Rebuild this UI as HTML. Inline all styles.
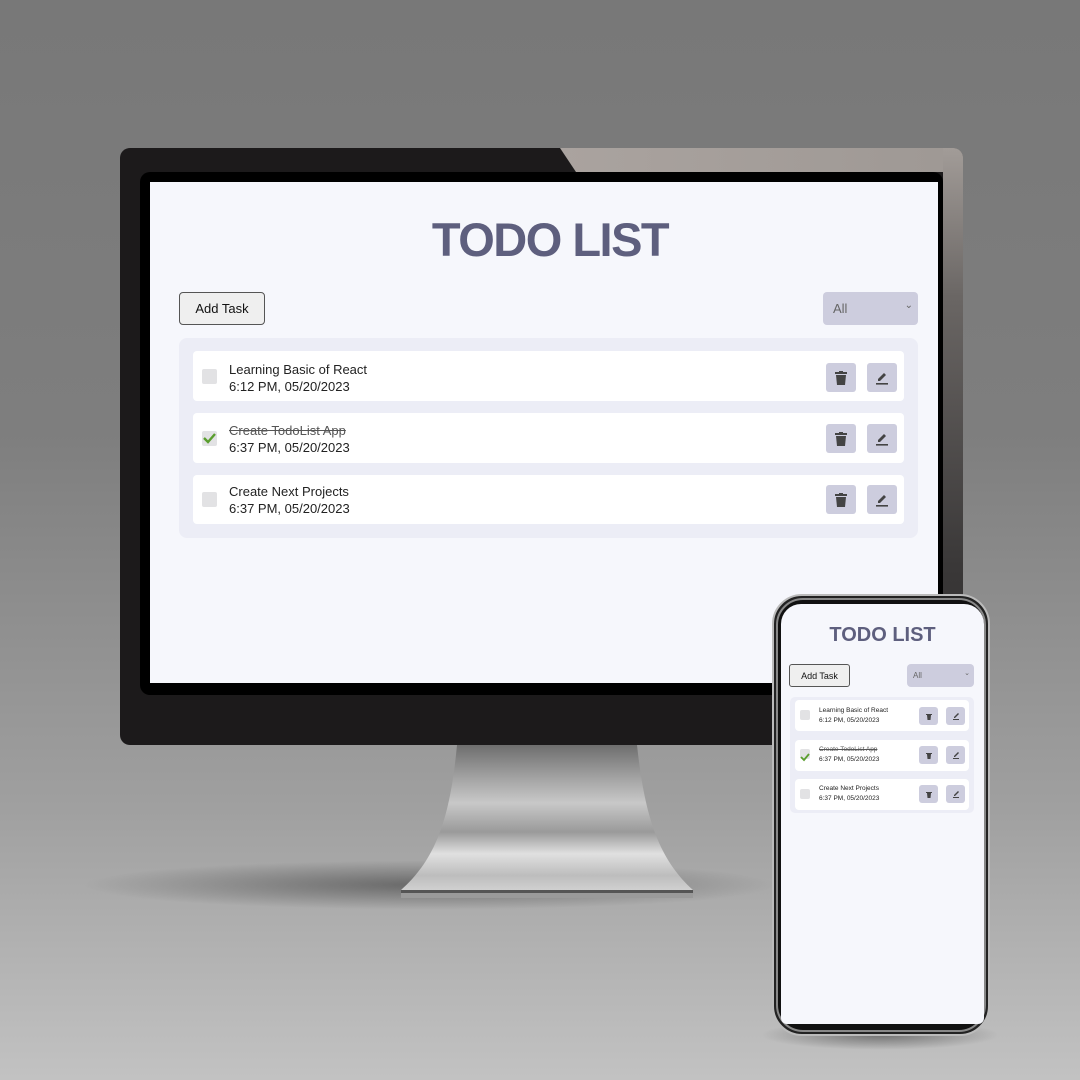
<!DOCTYPE html>
<html><head><meta charset="utf-8"><style>
*{margin:0;padding:0;box-sizing:border-box}
body{width:1080px;height:1080px;position:relative;overflow:hidden;font-family:"Liberation Sans",sans-serif;
background:linear-gradient(#787878 0%,#7e7e7e 40%,#a0a0a0 75%,#c2c2c2 100%)}
.a{position:absolute}
.t{color:#5e5f7e;font-weight:bold;text-align:center;letter-spacing:-1px}
.btn{background:#efefef;border:1px solid #555;border-radius:4px;font-size:13px;display:flex;align-items:center;justify-content:center;color:#111}
.sel{background:#cdcdde;border-radius:4px;color:#666;font-size:13px}
.list{background:#ecedf6;border-radius:8px}
.it{background:#fff;border-radius:4px}
.cb{background:#e2e2e4;border-radius:2px}
.ib{background:#cdcdde;border-radius:3px;display:flex;align-items:center;justify-content:center}
</style></head><body>
<div class="a" style="left:80px;top:860px;width:700px;height:50px;border-radius:50%;background:radial-gradient(ellipse,rgba(60,60,60,.6),rgba(0,0,0,0) 70%)"></div>
<svg class="a" style="left:395px;top:740px" width="305" height="165">
<defs><linearGradient id="sg" x1="0" y1="0" x2="0" y2="1">
<stop offset="0" stop-color="#6e6e6e"/><stop offset=".25" stop-color="#a8a8a8"/><stop offset=".4" stop-color="#c8c8c8"/><stop offset=".6" stop-color="#9a9a9a"/><stop offset=".75" stop-color="#e0e0e0"/><stop offset=".9" stop-color="#bdbdbd"/><stop offset="1" stop-color="#d0d0d0"/></linearGradient></defs>
<path d="M62 5 L242 5 C250 80 265 120 298 150 L6 150 C40 120 55 80 62 5 Z" fill="url(#sg)"/>
<rect x="6" y="150" width="292" height="3" fill="#555"/>
<rect x="6" y="153" width="292" height="5" fill="#9a9a9a"/>
</svg>
<div class="a" style="left:120px;top:148px;width:843px;height:597px;background:#1c1a1b;border-radius:10px;overflow:hidden">
<div class="a" style="left:440px;top:0;width:410px;height:24px;background:linear-gradient(90deg,#aaa39f,#9e9894);clip-path:polygon(0 0,100% 0,100% 100%,16px 100%)"></div>
<div class="a" style="right:0;top:0;width:20px;height:597px;background:linear-gradient(#a29c98,#6a6664 25%,#3a3838 70%,#2a2828)"></div>
</div>
<div class="a" style="left:140px;top:172px;width:803px;height:523px;background:#000;border-radius:10px"></div>
<div class="a" style="left:150px;top:182px;width:788px;height:501px;background:#f6f7fc"></div>
<div class="a t" style="left:150px;top:212px;width:800px;font-size:47px;letter-spacing:-1.5px">TODO LIST</div>
<div class="a btn" style="left:179px;top:292px;width:86px;height:33px">Add Task</div>
<div class="a sel" style="left:823px;top:292px;width:95px;height:33px"><span class="a" style="left:10px;top:9px">All</span><span class="a" style="right:5px;top:8px;font-size:10px">⌄</span></div>
<div class="a list" style="left:179px;top:338px;width:739px;height:200px"></div>

<div class="a it" style="left:193px;top:351px;width:711px;height:50px"></div>
<div class="a it" style="left:193px;top:413px;width:711px;height:50px"></div>
<div class="a it" style="left:193px;top:475px;width:711px;height:49px"></div>

<div class="a cb" style="left:202px;top:369px;width:15px;height:15px"></div>
<div class="a cb" style="left:202px;top:431px;width:15px;height:15px"><svg width="15" height="15"><path d="M2 7 L6 11 L13 3" stroke="#5a9e2e" stroke-width="2.4" fill="none"/></svg></div>
<div class="a cb" style="left:202px;top:492px;width:15px;height:15px"></div>

<div class="a" style="left:229px;top:361px;font-size:13px;line-height:17px;color:#222">Learning Basic of React<br>6:12 PM, 05/20/2023</div>
<div class="a" style="left:229px;top:422px;font-size:13px;line-height:17px;color:#222"><s style="color:#555">Create TodoList App</s><br>6:37 PM, 05/20/2023</div>
<div class="a" style="left:229px;top:483px;font-size:13px;line-height:17px;color:#222">Create Next Projects<br>6:37 PM, 05/20/2023</div>

<div class="a ib" style="left:826px;top:363px;width:30px;height:29px"><svg width="12" height="14"><rect x="0" y="1" width="12" height="2" fill="#444"/><rect x="4" y="0" width="4" height="2" fill="#444"/><path d="M1 4H11L10 14H2Z" fill="#444"/></svg></div>
<div class="a ib" style="left:867px;top:363px;width:30px;height:29px"><svg width="14" height="14"><path d="M3 10 L3 8 L9 2 L11 4 L5 10Z" fill="#444"/><rect x="1" y="12" width="12" height="1.6" fill="#444"/></svg></div>
<div class="a ib" style="left:826px;top:424px;width:30px;height:29px"><svg width="12" height="14"><rect x="0" y="1" width="12" height="2" fill="#444"/><rect x="4" y="0" width="4" height="2" fill="#444"/><path d="M1 4H11L10 14H2Z" fill="#444"/></svg></div>
<div class="a ib" style="left:867px;top:424px;width:30px;height:29px"><svg width="14" height="14"><path d="M3 10 L3 8 L9 2 L11 4 L5 10Z" fill="#444"/><rect x="1" y="12" width="12" height="1.6" fill="#444"/></svg></div>
<div class="a ib" style="left:826px;top:485px;width:30px;height:29px"><svg width="12" height="14"><rect x="0" y="1" width="12" height="2" fill="#444"/><rect x="4" y="0" width="4" height="2" fill="#444"/><path d="M1 4H11L10 14H2Z" fill="#444"/></svg></div>
<div class="a ib" style="left:867px;top:485px;width:30px;height:29px"><svg width="14" height="14"><path d="M3 10 L3 8 L9 2 L11 4 L5 10Z" fill="#444"/><rect x="1" y="12" width="12" height="1.6" fill="#444"/></svg></div>

<div class="a" style="left:760px;top:1020px;width:240px;height:30px;border-radius:50%;background:radial-gradient(ellipse,rgba(40,40,40,.5),rgba(0,0,0,0) 70%)"></div>
<div class="a" style="left:772px;top:594px;width:218px;height:442px;border-radius:30px;background:#222;border:2px solid #bbb"></div>
<div class="a" style="left:776px;top:598px;width:210px;height:434px;border-radius:27px;background:#111;border:2px solid #888"></div>
<div class="a" style="left:781px;top:604px;width:203px;height:420px;border-radius:20px 20px 6px 6px;background:#f6f7fc"></div>
<div class="a t" style="left:781px;top:624px;width:203px;font-size:20px;letter-spacing:0">TODO LIST</div>
<div class="a btn" style="left:789px;top:664px;width:61px;height:23px;font-size:9px;border-radius:3px">Add Task</div>
<div class="a sel" style="left:907px;top:664px;width:67px;height:23px;font-size:8px"><span class="a" style="left:6px;top:7px">All</span><span class="a" style="right:4px;top:5px;font-size:7px">⌄</span></div>
<div class="a list" style="left:790px;top:697px;width:184px;height:116px;border-radius:5px"></div>
<div class="a it" style="left:795px;top:700px;width:174px;height:31px"></div>
<div class="a it" style="left:795px;top:740px;width:174px;height:31px"></div>
<div class="a it" style="left:795px;top:779px;width:174px;height:31px"></div>
<div class="a cb" style="left:800px;top:710px;width:10px;height:10px"></div>
<div class="a cb" style="left:800px;top:749px;width:10px;height:10px"><svg width="10" height="10"><path d="M1 5 L4 8 L9 2" stroke="#5a9e2e" stroke-width="1.8" fill="none"/></svg></div>
<div class="a cb" style="left:800px;top:789px;width:10px;height:10px"></div>
<div class="a" style="left:819px;top:706px;font-size:6.5px;line-height:10px;color:#222">Learning Basic of React<br>6:12 PM, 05/20/2023</div>
<div class="a" style="left:819px;top:745px;font-size:6.5px;line-height:10px;color:#222"><s style="color:#555">Create TodoList App</s><br>6:37 PM, 05/20/2023</div>
<div class="a" style="left:819px;top:784px;font-size:6.5px;line-height:10px;color:#222">Create Next Projects<br>6:37 PM, 05/20/2023</div>
<div class="a ib" style="left:919px;top:707px;width:19px;height:18px"><svg width="6" height="7"><path d="M0 1H6V2H0ZM1 2H5L4.5 7H1.5Z" fill="#444"/></svg></div>
<div class="a ib" style="left:946px;top:707px;width:19px;height:18px"><svg width="8" height="8"><path d="M2 6L2 5L6 1L7 2L3 6Z" fill="#444"/><rect x="1" y="7" width="6" height="1" fill="#444"/></svg></div>
<div class="a ib" style="left:919px;top:746px;width:19px;height:18px"><svg width="6" height="7"><path d="M0 1H6V2H0ZM1 2H5L4.5 7H1.5Z" fill="#444"/></svg></div>
<div class="a ib" style="left:946px;top:746px;width:19px;height:18px"><svg width="8" height="8"><path d="M2 6L2 5L6 1L7 2L3 6Z" fill="#444"/><rect x="1" y="7" width="6" height="1" fill="#444"/></svg></div>
<div class="a ib" style="left:919px;top:785px;width:19px;height:18px"><svg width="6" height="7"><path d="M0 1H6V2H0ZM1 2H5L4.5 7H1.5Z" fill="#444"/></svg></div>
<div class="a ib" style="left:946px;top:785px;width:19px;height:18px"><svg width="8" height="8"><path d="M2 6L2 5L6 1L7 2L3 6Z" fill="#444"/><rect x="1" y="7" width="6" height="1" fill="#444"/></svg></div>
</body></html>
